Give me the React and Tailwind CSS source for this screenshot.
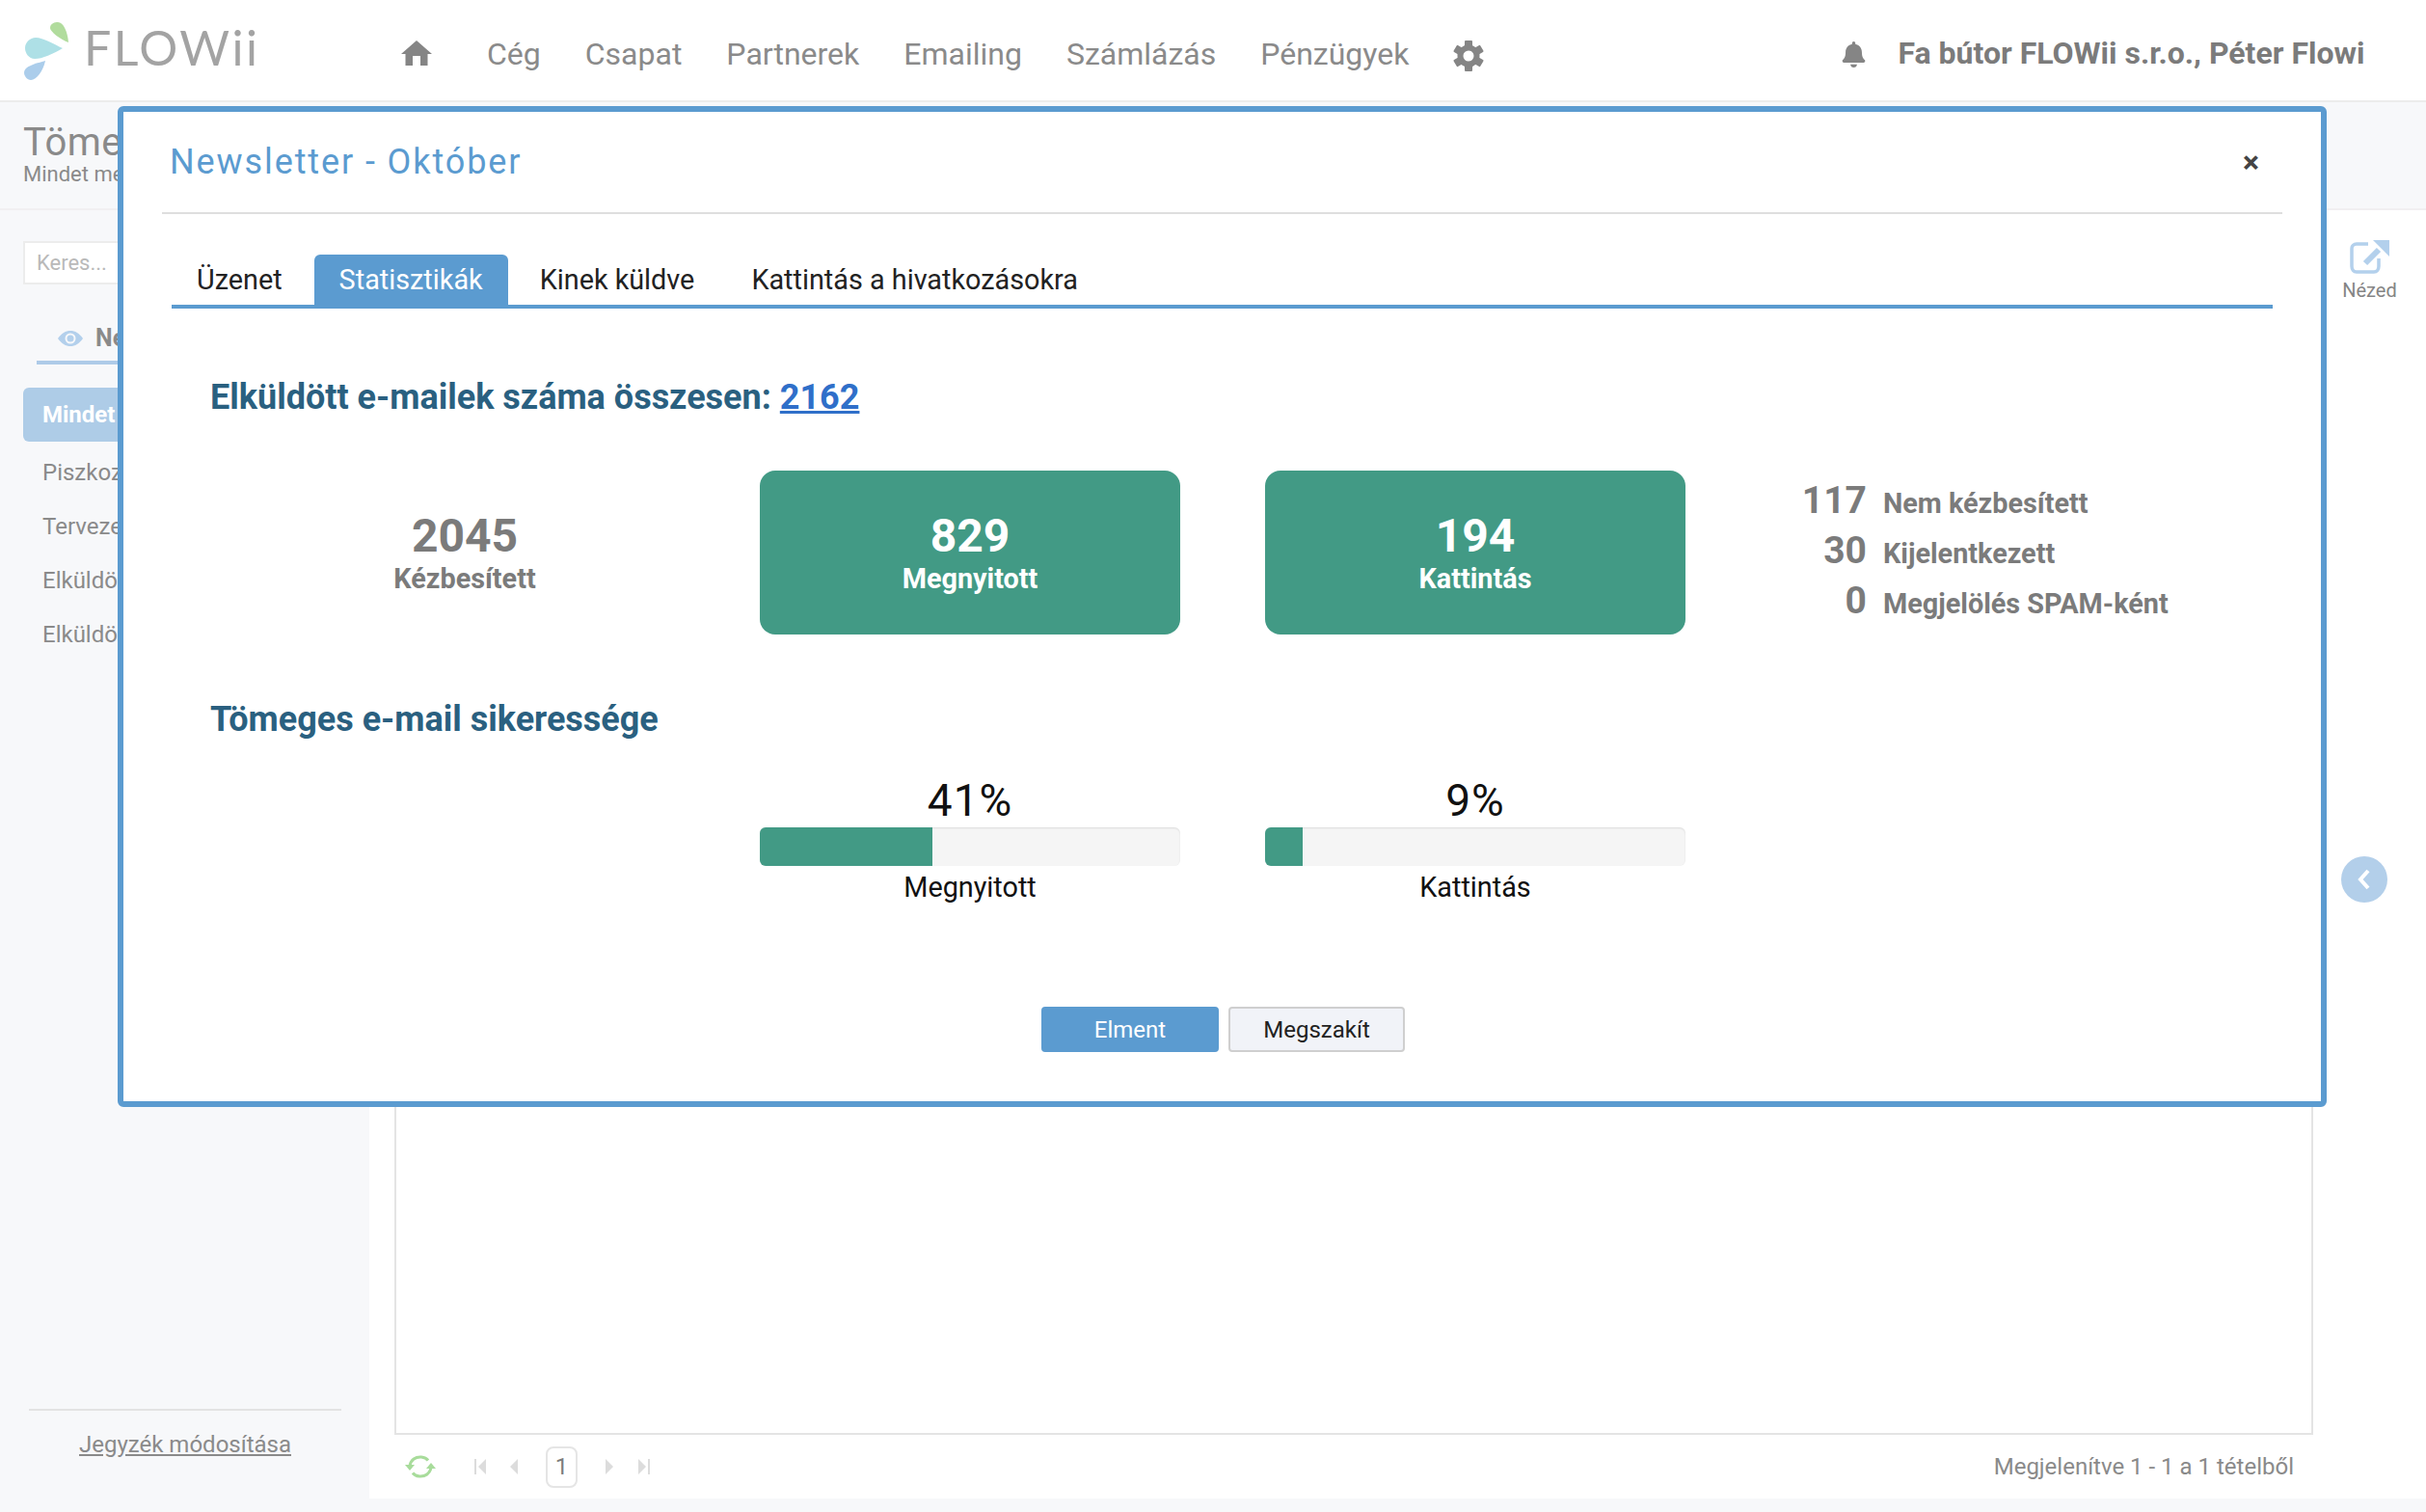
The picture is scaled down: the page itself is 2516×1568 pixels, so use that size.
import { FaBell } from "react-icons/fa";

const navItems = ["Cég", "Csapat", "Partnerek", "Emailing", "Számlázás", "Pénzügyek"];
const sideItems = ["Piszkoz", "Terveze", "Elküldö", "Elküldö"];
const otherStats = [
  ["117", "Nem kézbesített"],
  ["30", "Kijelentkezett"],
  ["0", "Megjelölés SPAM-ként"],
];

function Logo() {
  return (
    <svg className="w-[60px] h-[66px] shrink-0" viewBox="20 16 60 66">
      <path fill="#b1dc9d" d="M71 41C63 38 52 30 52 26C52 21 57 20 60 20C66 20 70 30 71 41Z" />
      <path fill="#aee0e6" d="M65 47C55 53 44 58 36 58C30 58 26 52 26 47C26 41 31 36 37 36C45 36 56 43 65 47Z" />
      <path fill="#abcdeb" d="M47 60C45 70 38 80 32 80C28 80 25 76 25 72C25 66 36 63 47 60Z" />
    </svg>
  );
}

function HomeIcon() {
  return (
    <svg className="w-[32px] h-[26px] shrink-0 mt-[-2px]" viewBox="0 0 32 26" fill="#858585">
      <path d="M16 0L32 14H27.500V26H20V16H12V26H4.500V14H0Z" />
    </svg>
  );
}

function GearIcon() {
  return (
    <svg className="ml-[45px] w-[34px] h-[34px] shrink-0 mt-[4px]" viewBox="0 0 34 34" fill="#858585">
      <circle cx="17" cy="17" r="8.500" fill="none" stroke="#858585" strokeWidth="6" />
      {[0, 60, 120, 180, 240, 300].map((deg) => (
        <rect key={deg} x="13" y="1" width="8" height="7" rx="1" transform={`rotate(${deg} 17 17)`} />
      ))}
    </svg>
  );
}

function EyeIcon() {
  return (
    <svg className="ml-[22px] w-[26px] h-[16px] shrink-0" viewBox="0 0 26 16">
      <path fill="#b3d0ec" d="M0 8C4 2.500 8 0 13 0C18 0 22 2.500 26 8C22 13.500 18 16 13 16C8 16 4 13.500 0 8Z" />
      <circle cx="13" cy="8" r="5.500" fill="#f7f8fa" />
      <circle cx="13" cy="8" r="3.500" fill="#b3d0ec" />
    </svg>
  );
}

function Header() {
  return (
    <div className="h-[106px] bg-white border-b-2 border-[#ececec] pt-[8px] flex items-center text-[#8a8a8a]">
      <div className="ml-[20px] w-[396px] mt-[-8px] flex items-center shrink-0">
        <Logo />
        <span className="ml-[7px] mb-[6px] font-['Lato',sans-serif] text-[50px] leading-none tracking-[2.5px] text-[#a3a3a3]">
          FLOWii
        </span>
      </div>
      <HomeIcon />
      <div className="ml-[57px] flex gap-[46px] text-[32px]">
        {navItems.map((item) => (
          <span key={item}>{item}</span>
        ))}
      </div>
      <GearIcon />
      <FaBell className="ml-[370px] w-[25px] h-[27px] shrink-0 text-[#858585]" />
      <span className="ml-[33px] mt-[-2px] text-[32px] font-bold text-[#7b7b7b]">
        Fa bútor FLOWii s.r.o., Péter Flowi
      </span>
    </div>
  );
}

function Sidebar() {
  return (
    <div className="w-[383px] shrink-0 flex flex-col pl-[24px] text-[#8a8a8a]">
      <div className="mt-[32px] w-[98px] h-[45px] border-2 border-r-0 border-[#ececec] bg-white pl-[12px] flex items-center text-[22px] text-[#b9b9b9]">
        Keres...
      </div>
      <div className="ml-[14px] mt-[32px] w-[84px] h-[51px] border-b-4 border-[#aecbe8] flex items-center">
        <EyeIcon />
        <span className="ml-[13px] text-[25px] font-bold text-[#8a8a8a]">Né</span>
      </div>
      <div className="mt-[24px] w-[98px] h-[56px] rounded-l-[6px] bg-[#aecce7] pl-[20px] flex items-center text-[24px] font-bold text-white">
        Mindet
      </div>
      <div className="mt-[4px] pl-[20px] flex flex-col text-[24px]">
        {sideItems.map((item, i) => (
          <span key={i} className="h-[56px] flex items-center">
            {item}
          </span>
        ))}
      </div>
      <div className="mt-auto ml-[6px] w-[324px] border-t-2 border-[#e3e3e3] mb-[54px] pt-[19px] text-center text-[24px] leading-[32px] underline">
        Jegyzék módosítása
      </div>
    </div>
  );
}

function RefreshIcon() {
  return (
    <svg className="w-[32px] h-[24px]" viewBox="0 0 32 24" fill="none">
      <path d="M5 11C6 5 11 1.500 17 2C20 2.300 22.500 3.500 24 5.500" stroke="#a8dc9b" strokeWidth="3" />
      <path d="M27 13C26 19 21 22.500 15 22C12 21.700 9.500 20.500 8 18.500" stroke="#a8dc9b" strokeWidth="3" />
      <path d="M0 10H10L5 16Z" fill="#a8dc9b" />
      <path d="M22 14H32L27 8Z" fill="#a8dc9b" />
    </svg>
  );
}

function PageIcon({ d }) {
  return (
    <svg className="w-[12px] h-[16px]" viewBox="0 0 12 16" fill="#dcdcdc">
      <path d={d} />
    </svg>
  );
}

function Pager() {
  return (
    <div className="h-[66px] flex items-center justify-between pr-[20px] text-[#8a8a8a]">
      <div className="flex items-center">
        <div className="ml-[11px]">
          <RefreshIcon />
        </div>
        <div className="ml-[40px]">
          <PageIcon d="M0 0H2V16H0ZM12 0V16L4 8Z" />
        </div>
        <div className="ml-[25px]">
          <PageIcon d="M8 0V16L0 8Z" />
        </div>
        <div className="ml-[25px] w-[33px] h-[43px] border-2 border-[#e5e5e5] rounded-[8px] flex items-center justify-center text-[24px] text-[#7d7d7d]">
          1
        </div>
        <div className="ml-[29px]">
          <PageIcon d="M0 0L8 8L0 16Z" />
        </div>
        <div className="ml-[22px]">
          <PageIcon d="M0 0L8 8L0 16ZM10 0H12V16H10Z" />
        </div>
      </div>
      <span className="text-[24px]">Megjelenítve 1 - 1 a 1 tételből</span>
    </div>
  );
}

function ShareIcon() {
  return (
    <svg className="w-[41px] h-[35px]" viewBox="0 0 41 35" fill="none">
      <path d="M19 4H7C4 4 2 6 2 9V27C2 30.500 4 33 7 33H25C28 33 30 30.500 30 27V19" stroke="#b3d0ec" strokeWidth="3.500" />
      <path d="M16 24L30 10" stroke="#b3d0ec" strokeWidth="6" />
      <path d="M24 0H41V17Z" fill="#b3d0ec" />
    </svg>
  );
}

function Page() {
  return (
    <div className="flex flex-col h-full">
      <Header />
      <div className="h-[112px] shrink-0 border-b-2 border-[#f1eff1] pl-[24px] pt-[21px] text-[#8a8a8a]">
        <div className="text-[40px] leading-[41px] tracking-[0.5px]">Töme</div>
        <div className="text-[22px] leading-[26px]">Mindet me</div>
      </div>
      <div className="flex-1 flex">
        <Sidebar />
        <div className="flex-1 bg-white mb-[14px] flex">
          <div className="w-[1990px] ml-[26px] flex flex-col">
            <div className="flex-1 border-l-2 border-r-2 border-b-2 border-[#e4e4e4]" />
            <Pager />
          </div>
          <div className="flex-1 flex flex-col items-center">
            <div className="mt-[31px]">
              <ShareIcon />
            </div>
            <span className="mt-[2px] text-[20px] text-[#858585]">Nézed</span>
          </div>
        </div>
      </div>
    </div>
  );
}

function StatCard({ value, label, filled }) {
  return (
    <div
      className={
        filled
          ? "h-[170px] rounded-[16px] bg-[#429a85] text-white flex flex-col items-center pt-[41px]"
          : "h-[170px] text-[#7b7b7b] flex flex-col items-center pt-[41px]"
      }
    >
      <span className="text-[48px] leading-[54px] font-bold">{value}</span>
      <span className="text-[28.800px] leading-[34px] font-bold">{label}</span>
    </div>
  );
}

function Progress({ percent, label, fill }) {
  return (
    <div className="flex flex-col items-center">
      <span className="text-[46px] leading-[48px] tracking-[1px] text-[#111]">{percent}</span>
      <div className="mt-[4px] w-full h-[40px] rounded-[6px] bg-[#f5f5f5] shadow-[inset_0_1px_2px_rgba(0,0,0,0.1)] overflow-hidden">
        <div className="h-full bg-[#429a85]" style={{ width: fill }} />
      </div>
      <span className="mt-[4px] text-[28.800px] leading-[36px] text-[#111]">{label}</span>
    </div>
  );
}

function Modal() {
  return (
    <div className="absolute left-[122px] top-[110px] w-[2291px] h-[1038px] border-[6px] border-[#5b9bd0] rounded-[6px] bg-white">
      <div className="mx-[40px] h-[106px] border-b-2 border-[#dedede] pl-[8px] pr-[24px] flex items-center justify-between">
        <span className="text-[36px] tracking-[1.900px] text-[#5b9bd0]">Newsletter - Október</span>
        <span className="text-[32px] font-bold leading-none text-[#444]">×</span>
      </div>
      <div className="mt-[42px] mx-[50px] pl-[1px] border-b-4 border-[#5b9bd0] flex gap-[8px] text-[28.800px] text-[#222]">
        <span className="h-[52px] px-[25px] pt-[1px] flex items-center">Üzenet</span>
        <span className="h-[52px] px-[26px] pt-[1px] flex items-center rounded-t-[6px] bg-[#5b9bd0] text-white">Statisztikák</span>
        <span className="h-[52px] pl-[25px] pr-[26px] pt-[1px] flex items-center">Kinek küldve</span>
        <span className="h-[52px] px-[25px] pt-[1px] flex items-center">Kattintás a hivatkozásokra</span>
      </div>
      <div className="mt-[70px] ml-[90px] text-[36px] leading-[44px] font-bold text-[#2a6080]">
        Elküldött e-mailek száma összesen: <span className="text-[#2f6fc9] underline">2162</span>
      </div>
      <div className="mt-[54px] ml-[136px] grid grid-cols-[436px_436px_436px_436px] gap-x-[88px]">
        <StatCard value="2045" label="Kézbesített" />
        <StatCard value="829" label="Megnyitott" filled />
        <StatCard value="194" label="Kattintás" filled />
        <div className="mt-[2px] flex flex-col text-[#7b7b7b]">
          {otherStats.map(([n, text]) => (
            <div key={text} className="h-[52px] flex items-baseline gap-[17px]">
              <span className="w-[100px] text-right text-[39px] font-bold">{n}</span>
              <span className="text-[28.800px] font-bold">{text}</span>
            </div>
          ))}
        </div>
      </div>
      <div className="mt-[66px] ml-[90px] text-[36px] leading-[44px] font-bold text-[#2a6080]">
        Tömeges e-mail sikeressége
      </div>
      <div className="mt-[38px] ml-[660px] grid grid-cols-[436px_436px] gap-x-[88px]">
        <Progress percent="41%" label="Megnyitott" fill="41%" />
        <Progress percent="9%" label="Kattintás" fill="9%" />
      </div>
      <div className="mt-[106px] ml-[952px] flex gap-[10px] text-[24px]">
        <div className="w-[184px] h-[47px] rounded-[4px] bg-[#5b9bd0] text-white flex items-center justify-center">Elment</div>
        <div className="w-[183px] h-[47px] rounded-[4px] border-2 border-[#cfcfcf] bg-[#f1f3f8] text-[#222] flex items-center justify-center">Megszakít</div>
      </div>
    </div>
  );
}

export default function App() {
  return (
    <div className="relative w-[2516px] h-[1568px] overflow-hidden bg-[#f7f8fa] font-['Roboto',sans-serif]">
      <Page />
      <Modal />
      <div className="absolute left-[2428px] top-[888px] w-[48px] h-[48px] rounded-full bg-[#b3cfea] flex items-center justify-center">
        <svg className="w-[16px] h-[22px]" viewBox="0 0 16 22" fill="none">
          <path d="M12 2L4 11L12 20" stroke="white" strokeWidth="4" />
        </svg>
      </div>
    </div>
  );
}
